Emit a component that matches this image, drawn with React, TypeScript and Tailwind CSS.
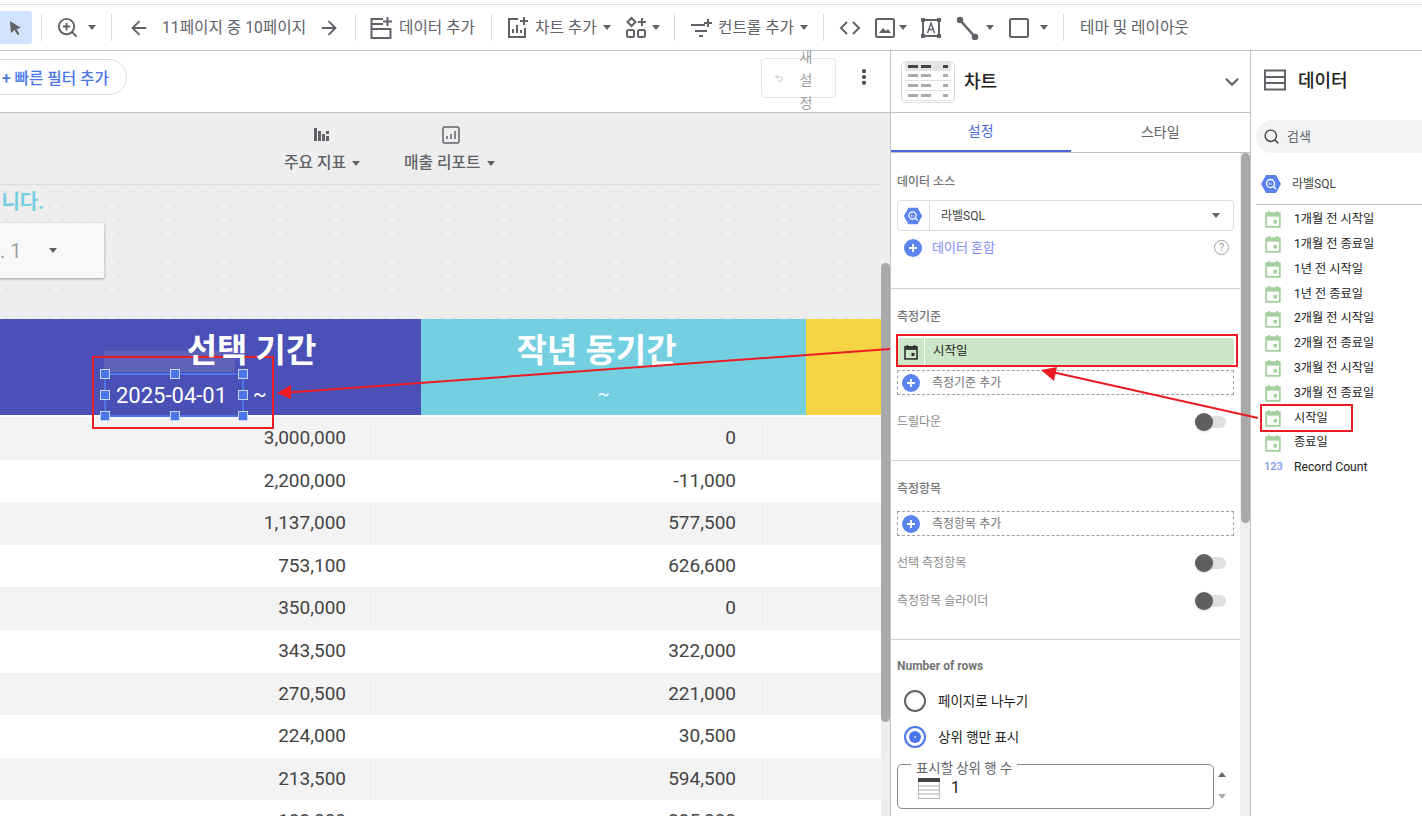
import { ArrowLeft, ArrowRight, ChevronDown, MoreVertical, Search, Undo2, ZoomIn } from "lucide-react";

const font = "font-['Roboto','Noto_Sans_CJK_KR',sans-serif]";

function Caret({ className = "" }: { className?: string }) {
  return <span className={`inline-block h-0 w-0 shrink-0 border-x-[4.5px] border-t-[5px] border-x-transparent border-t-[#5f6368] ${className}`} />;
}

function Sep({ className = "" }: { className?: string }) {
  return <div className={`h-[27px] w-px shrink-0 bg-[#dadce0] ${className}`} />;
}

function CalendarIcon({ color = "#a5cf9f", size = 18 }: { color?: string; size?: number }) {
  return (
    <svg width={size} height={size} viewBox="0 0 18 18" fill="none">
      <path d="M5 1v3M13 1v3" stroke={color} strokeWidth="2" />
      <rect x="2.2" y="3.2" width="13.6" height="13.6" fill="none" stroke={color} strokeWidth="1.8" />
      <rect x="2.2" y="3.2" width="13.6" height="3.4" fill={color} />
      <rect x="9.5" y="10" width="3.5" height="3.5" fill={color} />
    </svg>
  );
}

function BqIcon({ size = 22 }: { size?: number }) {
  return (
    <svg width={size} height={size} viewBox="0 0 22 22">
      <path d="M6 2h10l5 9-5 9H6L1 11z" fill="#5b83ee" />
      <circle cx="10.5" cy="10.5" r="4" fill="none" stroke="#fff" strokeWidth="1.3" />
      <path d="M13.5 13.5l2.6 2.6" stroke="#fff" strokeWidth="1.4" />
      <path d="M9.4 9.5v2.4M11.2 10.4v1.5" stroke="#fff" strokeWidth="0.9" />
    </svg>
  );
}

function DataIcon({ size = 24, plus = false }: { size?: number; plus?: boolean }) {
  return (
    <svg width={size} height={size} viewBox="0 0 24 24" fill="none" stroke="#5f6368" strokeWidth="2" className="shrink-0">
      {plus ? (
        <>
          <path d="M14 3H2.500v19h19v-9H2.500M2.500 8H14" />
          <path d="M18.500 1v9M14 5.500h9" />
          <path d="M5 5.500v.1M5 10.500v.1M5 16v.1M5 19v.1" />
        </>
      ) : (
        <>
          <rect x="2" y="2.500" width="20" height="19" />
          <path d="M2 9h20M2 15h20M5 6v.1M5 12v.1M5 18v.1" />
        </>
      )}
    </svg>
  );
}

function PlusCircle({ size = 18 }: { size?: number }) {
  return (
    <span className="flex shrink-0 items-center justify-center rounded-full bg-[#5b83ee] text-white" style={{ width: size, height: size }}>
      <svg width="10" height="10" viewBox="0 0 10 10"><path d="M5 1v8M1 5h8" stroke="#fff" strokeWidth="1.800" /></svg>
    </span>
  );
}

function Toggle() {
  return (
    <div className="relative h-[12px] w-[31px]">
      <div className="absolute left-[2px] right-0 top-0 h-[12px] rounded-full bg-[#e0e0e0]" />
      <div className="absolute left-0 top-[-3px] h-[18px] w-[18px] rounded-full bg-[#5f5f5f] shadow" />
    </div>
  );
}

function ChartThumb() {
  const row = (dark: boolean, key: number) => (
    <div key={key} className={`flex items-center gap-[3px] px-[3px] py-[3px] ${dark ? "bg-[#e4e4e4]" : "border-b border-[#e0e0e0]"}`}>
      <div className={`h-[3px] w-[10px] ${dark ? "bg-[#444]" : "bg-[#aaa]"}`} />
      <div className={`h-[3px] w-[10px] ${dark ? "bg-[#444]" : "bg-[#aaa]"}`} />
      <div className={`ml-auto h-[3px] w-[5px] ${dark ? "bg-[#444]" : "bg-[#aaa]"}`} />
    </div>
  );
  return (
    <div className="flex h-[42px] w-[54px] flex-col justify-center rounded-[5px] border border-[#dadce0] bg-white px-[3px]">
      {[true, false, false, false].map((d, i) => row(d, i))}
    </div>
  );
}

const rows = [
  ["3,000,000", "0"],
  ["2,200,000", "-11,000"],
  ["1,137,000", "577,500"],
  ["753,100", "626,600"],
  ["350,000", "0"],
  ["343,500", "322,000"],
  ["270,500", "221,000"],
  ["224,000", "30,500"],
  ["213,500", "594,500"],
  ["183,000", "335,000"],
];

const fields = [
  "1개월 전 시작일", "1개월 전 종료일", "1년 전 시작일", "1년 전 종료일", "2개월 전 시작일",
  "2개월 전 종료일", "3개월 전 시작일", "3개월 전 종료일", "시작일", "종료일",
];

function Toolbar() {
  return (
    <div className="mt-[4px] flex h-[47px] shrink-0 items-center whitespace-nowrap border-y border-b-[#bdc1c6] border-t-[#e0e0e0] bg-white text-[15.700px] text-[#5f6368]">
      <div className="flex h-[33px] w-[32px] shrink-0 items-center justify-center rounded-r-[3px] bg-[#d3e3fd]">
        <svg width="14" height="16" viewBox="0 0 14 16"><path d="M1 1l11 7-4.500 1 3 5-2 1-3-5-3.500 3z" fill="#5f6368" /></svg>
      </div>
      <Sep className="ml-[9px]" />
      <ZoomIn size={23} className="ml-[14px] shrink-0" />
      <Caret className="ml-[9px]" />
      <Sep className="ml-[15px]" />
      <ArrowLeft size={22} className="ml-[16px] shrink-0" />
      <span className="ml-[12px] w-[143px] shrink-0">11페이지 중 10페이지</span>
      <ArrowRight size={22} className="ml-[13px] shrink-0" />
      <Sep className="ml-[15px]" />
      <div className="ml-[13px]"><DataIcon plus /></div>
      <span className="ml-[6px] w-[76px] shrink-0">데이터 추가</span>
      <Sep className="ml-[16px]" />
      <svg width="24" height="24" viewBox="0 0 24 24" fill="none" stroke="#5f6368" strokeWidth="2" className="ml-[13px] shrink-0">
        <path d="M13 3H4v18h16v-9M8 17v-4M12 17V9M16 17v-3M19 1v8M15 5h8" />
      </svg>
      <span className="ml-[6px] w-[62px] shrink-0">차트 추가</span>
      <Caret className="ml-[6px]" />
      <svg width="24" height="24" viewBox="0 0 24 24" fill="none" stroke="#5f6368" strokeWidth="2" className="ml-[13px] shrink-0">
        <path d="M7.500 2l4 4-4 4-4-4zM18 2v8M14 6h8" />
        <rect x="3" y="14" width="7" height="7" rx="1.500" /><rect x="14" y="14" width="7" height="7" rx="1.500" />
      </svg>
      <Caret className="ml-[4px]" />
      <Sep className="ml-[14px]" />
      <svg width="24" height="24" viewBox="0 0 24 24" fill="none" stroke="#5f6368" strokeWidth="2" className="ml-[14px] shrink-0">
        <path d="M2 9h14M6 15h12M10 20h4M19 3v8M15 7h8" />
      </svg>
      <span className="ml-[5px] w-[77px] shrink-0">컨트롤 추가</span>
      <Caret className="ml-[5px]" />
      <Sep className="ml-[15px]" />
      <svg width="24" height="24" viewBox="0 0 24 24" fill="none" stroke="#5f6368" strokeWidth="2" className="ml-[14px] shrink-0">
        <path d="M9 6l-6 6 6 6M15 6l6 6-6 6" />
      </svg>
      <svg width="24" height="24" viewBox="0 0 24 24" fill="none" stroke="#5f6368" strokeWidth="2" className="ml-[11px] shrink-0">
        <rect x="3" y="3" width="18" height="18" rx="1.500" />
        <path d="M6 17l4-5 3 3 2-2 3 4z" fill="#5f6368" stroke="none" />
      </svg>
      <Caret className="ml-[2px]" />
      <svg width="24" height="24" viewBox="0 0 24 24" fill="none" stroke="#5f6368" strokeWidth="2" className="ml-[12px] shrink-0">
        <rect x="4" y="4" width="16" height="16" />
        <path d="M8.500 17l3.500-10 3.500 10M10 13.500h4" strokeWidth="1.400" />
        <path d="M2 2h4v4H2zM18 2h4v4h-4zM2 18h4v4H2zM18 18h4v4h-4z" fill="#5f6368" stroke="none" />
      </svg>
      <svg width="24" height="24" viewBox="0 0 24 24" fill="none" stroke="#5f6368" strokeWidth="2.500" className="ml-[12px] shrink-0">
        <path d="M5 4l15 17" />
        <circle cx="5" cy="4" r="2" fill="#5f6368" /><circle cx="20" cy="21" r="2" fill="#5f6368" />
      </svg>
      <Caret className="ml-[7px]" />
      <svg width="24" height="24" viewBox="0 0 24 24" fill="none" stroke="#5f6368" strokeWidth="2" className="ml-[13px] shrink-0">
        <rect x="3" y="3" width="18" height="18" rx="1.500" />
      </svg>
      <Caret className="ml-[9px]" />
      <Sep className="ml-[15px]" />
      <span className="ml-[16px]">테마 및 레이아웃</span>
    </div>
  );
}

function Canvas() {
  return (
    <div className="relative flex w-[890px] shrink-0 flex-col">
      <div className="relative flex h-[62px] shrink-0 items-start border-b border-[#bdc1c6] bg-white pt-[8px]">
        <div className="ml-[-20px] flex h-[36px] w-[147px] items-center justify-center rounded-full border border-[#dadce0] pl-[4px] pt-[3px] text-[15.700px] font-medium text-[#4a76e8]">
          + 빠른 필터 추가
        </div>
        <div className="ml-auto mr-[54px] mt-[-1px] flex h-[40px] w-[75px] items-center rounded-[4px] border border-[#e5e5e5] pl-[12px] text-[#bdbdbd]">
          <Undo2 size={10} />
          <span className="ml-[15px] w-[14px] pt-[4px] text-center text-[14px] leading-[23px] text-[#9e9e9e]">새 설 정</span>
        </div>
        <MoreVertical size={20} strokeWidth={3} className="absolute left-[854px] top-[16px] text-[#444]" />
      </div>

      <div className="flex h-[72px] shrink-0 items-center border-b border-[#dadce0] bg-[#eeeeee] pt-[4px] text-[15.800px] font-medium text-[#5f6368]">
        <div className="ml-[284px] flex flex-col items-center">
          <svg width="16" height="16" viewBox="0 0 16 16" fill="#5f6368" className="mb-[9px]">
            <path d="M0 2h3v13H0zM4 5h3v10H4zM8 8h3v7H8zM12 5h3v3h-3zM12 10h3v5h-3z" />
          </svg>
          <div className="flex items-center gap-[6px]">주요 지표<Caret /></div>
        </div>
        <div className="ml-[44px] flex flex-col items-center">
          <svg width="18" height="18" viewBox="0 0 18 18" fill="none" stroke="#5f6368" strokeWidth="1.500" className="mb-[7px] ml-[4px]">
            <rect x="1" y="1" width="16" height="16" rx="1.500" />
            <path d="M5 13v-3M9 13V8M13 13V5" />
          </svg>
          <div className="flex items-center gap-[6px]">매출 리포트<Caret /></div>
        </div>
      </div>

      <div className="relative h-[134px] shrink-0 overflow-hidden bg-[#eeeeee] bg-[radial-gradient(#e2e2e2_1px,transparent_1px)] bg-[length:14px_14px]">
        <div className="absolute right-[846px] top-[2px] whitespace-nowrap text-[20px] font-bold text-[#74cfe1]">입니다.</div>
        <div className="absolute left-[-10px] top-[38px] flex h-[55px] w-[114px] items-center rounded-[1px] bg-[#f8f8f8] pl-[10px] text-[20px] text-[#9e9e9e] shadow-[0_1px_3px_rgba(0,0,0,0.35)]">
          . 1
          <Caret className="ml-[28px]" />
        </div>
      </div>

      <div className="relative flex h-[96px] shrink-0 text-white">
        <div className="flex w-[421px] flex-col items-center bg-[#4b50b6] pl-[82px] pt-[8px]">
          <div className="relative z-10 text-[33px] font-bold leading-[48px]">선택 기간</div>
        </div>
        <div className="flex w-[385px] flex-col items-center bg-[#74cfe1] pt-[8px]">
          <div className="pr-[34px] text-[33px] font-bold leading-[48px]">작년 동기간</div>
          <div className="mt-[7px] pr-[20px] text-[18px] leading-[24px] text-white/90">~</div>
        </div>
        <div className="w-[84px] bg-[#f5d544]" />
        <div className="absolute left-[104px] top-[32px] h-[21px] w-[131px] bg-[#6062b8]" />
        <div className="absolute left-[104px] top-[54px] flex h-[44px] w-[140px] items-center border-2 border-[#4a76e8] pl-[10px] text-[22px] text-white">
          2025-04-01
          {[
            "left-[-6px] top-[-6px]", "left-[64px] top-[-6px]", "right-[-6px] top-[-6px]",
            "left-[-6px] top-[15px]", "right-[-6px] top-[15px]",
            "left-[-6px] bottom-[-6px]", "left-[64px] bottom-[-6px]", "right-[-6px] bottom-[-6px]",
          ].map((c) => (
            <span key={c} className={`absolute h-[10px] w-[10px] border border-[#c8d6fa] bg-[#4a76e8] ${c}`} />
          ))}
        </div>
        <div className="absolute left-[253px] top-[60px] text-[20px]">~</div>
      </div>

      <div className="min-h-0 flex-1 overflow-hidden pt-[2px] text-[19px] text-[#444]">
        {rows.map(([a, b], i) => (
          <div key={a} className={`flex h-[42.600px] items-center ${i % 2 === 0 ? "bg-[#f3f3f3]" : "bg-white"}`}>
            <div className={`flex h-full w-[371px] items-center justify-end border-r pr-[24px] ${i % 2 === 0 ? "border-[#ececec]" : "border-transparent"}`}>{a}</div>
            <div className={`flex h-full w-[392px] items-center justify-end border-r pr-[26px] ${i % 2 === 0 ? "border-[#ececec]" : "border-transparent"}`}>{b}</div>
          </div>
        ))}
      </div>

      <div className="absolute bottom-0 right-0 top-[62px] w-[9px] bg-[#eeeeee]" />
      <div className="absolute right-0 top-[212px] h-[459px] w-[9px] rounded-full bg-[#a9a9a9]" />
    </div>
  );
}

function SectionLabel({ children }: { children: React.ReactNode }) {
  return <div className="text-[12px] font-medium text-[#757575]">{children}</div>;
}

function DashedAdd({ label }: { label: string }) {
  return (
    <div className="flex h-[25px] w-[337px] items-center border border-dashed border-[#9e9e9e] pl-[4px] text-[12px] text-[#757575]">
      <PlusCircle />
      <span className="ml-[12px]">{label}</span>
    </div>
  );
}

function SetupPanel() {
  return (
    <div className="flex w-[360px] shrink-0 flex-col border-l border-[#c4c4c4]">
      <div className="flex h-[62px] shrink-0 items-center border-b border-[#bdc1c6] pl-[10px] pr-[7px]">
        <ChartThumb />
        <span className="ml-[9px] text-[18px] font-medium text-[#222]">차트</span>
        <ChevronDown size={22} className="ml-auto text-[#555]" />
      </div>
      <div className="flex h-[40px] shrink-0 border-b border-[#bdc1c6] text-[14px]">
        <div className="flex flex-1 items-center justify-center border-b-2 border-[#4a68d9] text-[#4a68d9]">설정</div>
        <div className="flex flex-1 items-center justify-center text-[#5f6368]">스타일</div>
      </div>
      <div className="relative min-h-0 flex-1 overflow-hidden pr-[10px]">
        <div className="absolute bottom-0 right-0 top-0 w-[10px] bg-[#efefef]">
          <div className="ml-[1px] h-[370px] w-[9px] rounded-full bg-[#a9a9a9]" />
        </div>

        <div className="h-[136px] border-b border-[#cfcfcf] px-[6px] pt-[20px]">
          <SectionLabel>데이터 소스</SectionLabel>
          <div className="mt-[9px] flex h-[31px] items-center rounded-[4px] border border-[#dadce0] pl-[5px] pr-[13px] text-[12px] text-[#444]">
            <BqIcon size={20} />
            <span className="ml-[6px] flex h-full items-center border-l border-[#dadce0] pl-[11px]">라벨SQL</span>
            <Caret className="ml-auto" />
          </div>
          <div className="mt-[7px] flex items-center pl-[7px] pr-[5px] text-[13px] text-[#7f8cf0]">
            <PlusCircle />
            <span className="ml-[10px]">데이터 혼합</span>
            <span className="ml-auto flex h-[15px] w-[15px] items-center justify-center rounded-full border border-[#9e9e9e] text-[11px] text-[#9e9e9e]">?</span>
          </div>
        </div>

        <div className="h-[172px] border-b border-[#cfcfcf] px-[6px] pt-[19px]">
          <SectionLabel>측정기준</SectionLabel>
          <div className="mt-[12px] flex h-[27px] w-[337px] items-center rounded-[3px] bg-[#cde5c8] text-[12.500px] text-[#222]">
            <div className="flex h-full w-[28px] items-center justify-center border-r border-white"><CalendarIcon color="#333" size={16} /></div>
            <span className="ml-[8px]">시작일</span>
          </div>
          <div className="mt-[5px]"><DashedAdd label="측정기준 추가" /></div>
          <div className="mt-[18px] flex items-center justify-between pr-[8px] text-[12px] text-[#8a8a8a]">드릴다운<Toggle /></div>
        </div>

        <div className="h-[179px] border-b border-[#cfcfcf] px-[6px] pt-[19px]">
          <SectionLabel>측정항목</SectionLabel>
          <div className="mt-[13px]"><DashedAdd label="측정항목 추가" /></div>
          <div className="mt-[18px] flex items-center justify-between pr-[8px] text-[12px] text-[#8a8a8a]">선택 측정항목<Toggle /></div>
          <div className="mt-[20px] flex items-center justify-between pr-[8px] text-[12px] text-[#8a8a8a]">측정항목 슬라이더<Toggle /></div>
        </div>

        <div className="px-[6px] pt-[17px]">
          <div className="text-[12px] font-bold text-[#757575]">Number of rows</div>
          <div className="mt-[15px] flex items-center pl-[7px] text-[13.500px] text-[#222]">
            <span className="h-[22px] w-[22px] rounded-full border-2 border-[#5f6368]" />
            <span className="ml-[12px]">페이지로 나누기</span>
          </div>
          <div className="mt-[14px] flex items-center pl-[7px] text-[13.500px] text-[#222]">
            <span className="flex h-[22px] w-[22px] items-center justify-center rounded-full border-2 border-[#4a76e8]">
              <span className="flex h-[12px] w-[12px] items-center justify-center rounded-full bg-[#4a76e8]">
                <span className="h-[2px] w-[2px] rounded-full bg-[#c8d6fa]" />
              </span>
            </span>
            <span className="ml-[12px]">상위 행만 표시</span>
          </div>
          <div className="relative mt-[16px] flex h-[45px] w-[317px] items-center rounded-[5px] border border-[#8a8a8a] pl-[20px]">
            <span className="absolute left-[13px] top-[-4px] bg-white px-[5px] text-[13.400px] leading-[15px] text-[#5f6368]">표시할 상위 행 수</span>
            <svg width="22" height="21" viewBox="0 0 22 21" className="mt-[4px]">
              <rect x="0.500" y="0.500" width="21" height="20" fill="#fff" stroke="#bbb" />
              <rect x="0" y="0" width="22" height="4" fill="#444" />
              <path d="M0 8h22M0 12h22M0 16h22" stroke="#aaa" />
            </svg>
            <span className="ml-[11px] mt-[2px] text-[16px] text-[#222]">1</span>
            <span className="absolute right-[-13px] top-[7px] h-0 w-0 border-x-[4px] border-b-[5px] border-x-transparent border-b-[#666]" />
            <span className="absolute bottom-[9px] right-[-13px] h-0 w-0 border-x-[4px] border-t-[5px] border-x-transparent border-t-[#aaa]" />
          </div>
        </div>
      </div>
    </div>
  );
}

function DataPanel() {
  return (
    <div className="flex min-w-0 flex-1 flex-col border-l border-[#c4c4c4]">
      <div className="flex h-[62px] shrink-0 items-center pb-[4px] pl-[12px]">
        <DataIcon />
        <span className="ml-[11px] text-[18px] font-medium text-[#222]">데이터</span>
      </div>
      <div className="ml-[5px] mt-[7px] flex h-[33px] shrink-0 items-center rounded-l-full bg-[#f1f3f4] pl-[7px] text-[13px] text-[#5f6368]">
        <Search size={17} className="text-[#444]" />
        <span className="ml-[7px]">검색</span>
      </div>
      <div className="ml-[5px] mt-[10px] flex h-[42px] shrink-0 items-center border-b border-[#c4c4c4] pl-[4px] text-[12px] text-[#444]">
        <BqIcon />
        <span className="ml-[10px]">라벨SQL</span>
      </div>
      <div className="mt-[2px] text-[12.200px] text-[#222]">
        {fields.map((f) => (
          <div key={f} className="flex h-[24.800px] items-center pl-[13px]">
            <CalendarIcon />
            <span className="ml-[12px]">{f}</span>
          </div>
        ))}
        <div className="flex h-[24.800px] items-center pl-[13px]">
          <span className="w-[18px] text-[11px] font-bold text-[#8aa4f0]">123</span>
          <span className="ml-[12px]">Record Count</span>
        </div>
      </div>
    </div>
  );
}

function Annotations() {
  return (
    <>
      <div className="pointer-events-none absolute left-[92px] top-[356px] h-[73px] w-[182px] border-2 border-[#ed1c24]" />
      <div className="pointer-events-none absolute left-[896px] top-[334px] h-[33px] w-[342px] border-2 border-[#ed1c24]" />
      <div className="pointer-events-none absolute left-[1260px] top-[404px] h-[28px] w-[93px] border-2 border-[#ed1c24]" />
      <svg className="pointer-events-none absolute left-0 top-0" width="1422" height="816" fill="none">
        <path d="M890 349L288 392.500" stroke="#ed1c24" strokeWidth="2" />
        <path d="M277 393L291 385V399z" fill="#ed1c24" />
        <path d="M1258 418L1052 372" stroke="#ed1c24" strokeWidth="2" />
        <path d="M1041 370L1057 367L1054 381z" fill="#ed1c24" />
      </svg>
    </>
  );
}

export default function App() {
  return (
    <div className={`relative flex h-[816px] w-[1422px] flex-col overflow-hidden bg-white ${font}`}>
      <Toolbar />
      <div className="flex min-h-0 flex-1">
        <Canvas />
        <SetupPanel />
        <DataPanel />
      </div>
      <Annotations />
    </div>
  );
}
